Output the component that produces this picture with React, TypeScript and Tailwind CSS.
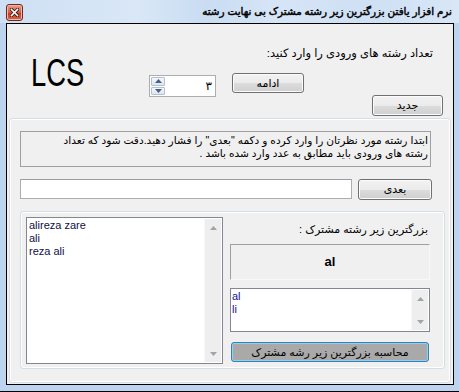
import React from "react";

function WinButton({ label, className = "" }: { label: string; className?: string }) {
  return (
    <div
      className={
        "flex items-center justify-center rounded-[3px] border border-[#707070] bg-[linear-gradient(to_bottom,#f2f2f2_0%,#ebebeb_50%,#dddddd_51%,#cfcfcf_100%)] shadow-[inset_0_0_0_1px_#fcfcfc] text-[11px] leading-none " +
        className
      }
      dir="rtl"
    >
      {label}
    </div>
  );
}

function Tri({ down = false, color = "#a3a3a3" }: { down?: boolean; color?: string }) {
  return (
    <svg width="7" height="4" viewBox="0 0 7 4">
      {down ? <polygon points="0,0 7,0 3.5,4" fill={color} /> : <polygon points="0,4 7,4 3.5,0" fill={color} />}
    </svg>
  );
}

function ScrollBar() {
  return (
    <div className="w-[17px] h-full flex flex-col justify-between bg-[#eeeeee] border-l border-[#f8f8f8]">
      <div className="h-[17px] flex items-center justify-center">
        <Tri />
      </div>
      <div className="h-[17px] flex items-center justify-center">
        <Tri down />
      </div>
    </div>
  );
}

export default function App() {
  return (
    <div className="w-[459px] h-[392px] bg-[#bdd4ee] flex flex-col overflow-hidden font-['Liberation_Sans','DejaVu_Sans',sans-serif] text-[11px] text-black">
      {/* Title bar */}
      <div className="h-[23px] shrink-0 flex items-start justify-between bg-[linear-gradient(to_right,#cfe0f4,#d9e7f7_30%,#c9dcf2_45%,#d6e5f6_60%,#cfe0f4_80%,#d8e6f6)]">
        <div className="ml-[6px] mt-[4px] w-[17px] h-[17px] rounded-[3px] border border-[#6b2a20] bg-[linear-gradient(to_bottom,#e8a08e,#d5593f_50%,#c43b22_51%,#d8664a)] flex items-center justify-center shadow-[inset_0_0_0_1px_#f0b8a8]">
          <svg width="9" height="9" viewBox="0 0 9 9">
            <path d="M1.5 1.5 L7.5 7.5 M7.5 1.5 L1.5 7.5" stroke="#3a1a14" strokeWidth="3.2" strokeLinecap="square" />
            <path d="M1.5 1.5 L7.5 7.5 M7.5 1.5 L1.5 7.5" stroke="#ffffff" strokeWidth="1.6" strokeLinecap="square" />
          </svg>
        </div>
        <div
          dir="rtl"
          className="mr-[7px] mt-[5px] text-[10.4px] leading-[14px] text-black [-webkit-text-stroke:0.45px_black]"
        >
          نرم افزار یافتن بزرگترین زیر رشته مشترک بی نهایت رشته
        </div>
      </div>

      {/* Client area */}
      <div className="ml-[6px] w-[448px] h-[362px] shrink-0 border border-black bg-[#f0f0f0] flex flex-col">
        {/* Top area */}
        <div className="h-[94px] flex">
          <div className="w-[142px] pl-[24px] pt-[30px]">
            <div className="text-[38px] leading-none font-['Liberation_Sans',sans-serif] scale-x-[0.72] origin-left">LCS</div>
          </div>
          <div className="w-[67px] pt-[51px]">
            <div className="w-[67px] h-[22px] bg-white border border-[#abadb3] flex items-center">
              <div className="ml-[1px] w-[14px] h-[18px] flex flex-col gap-[1px]">
                <div className="flex-1 flex items-center justify-center bg-[linear-gradient(to_bottom,#f4f7fb,#dde5ef)] border border-[#b4c0d2] rounded-[1px]">
                  <Tri color="#4a5f85" />
                </div>
                <div className="flex-1 flex items-center justify-center bg-[linear-gradient(to_bottom,#f4f7fb,#dde5ef)] border border-[#b4c0d2] rounded-[1px]">
                  <Tri down color="#4a5f85" />
                </div>
              </div>
              <div className="flex-1 text-right pr-[3px] text-[12px]">٣</div>
            </div>
          </div>
          <div className="flex-1 flex flex-col items-start">
            <div dir="rtl" className="self-stretch mt-[23px] h-[13px] leading-[13px] pr-[20px] text-right text-[11.5px]">
              تعداد رشته های ورودی را وارد کنید:
            </div>
            <WinButton label="ادامه" className="mt-[13px] ml-[16px] w-[72px] h-[20px]" />
            <WinButton label="جدید" className="mt-[2px] self-end mr-[10px] w-[71px] h-[21px]" />
          </div>
        </div>

        {/* Group 2 */}
        <div className="ml-[2px] w-[442px] h-[265px] rounded-[3px] border border-[#d5dfe5] shadow-[inset_0_0_0_1px_#ffffff] flex flex-col">
          <div
            dir="rtl"
            className="ml-[10px] mt-[12px] w-[411px] h-[36px] border border-[#a0a0a0] pr-[2px] pt-[2px] text-right leading-[13px] text-[10.6px]"
          >
            ابتدا رشته مورد نظرتان را وارد کرده و دکمه "بعدی" را فشار دهید.دقت شود که تعداد
            <br />
            رشته های ورودی باید مطابق به عدد وارد شده باشد .
          </div>
          <div className="mt-[12px] flex items-start">
            <div className="ml-[10px] w-[332px] h-[20px] bg-white border border-[#abadb3] border-t-[#9a9ca4]" />
            <WinButton label="بعدی" className="ml-[6px] w-[74px] h-[21px]" />
          </div>

          {/* Inner group */}
          <div className="ml-[10px] mt-[11px] w-[425px] h-[158px] rounded-[3px] border border-[#d5dfe5] shadow-[inset_0_0_0_1px_#ffffff] flex">
            <div className="ml-[5px] mt-[5px] w-[197px] h-[147px] bg-white border border-[#828790] flex">
              <div className="flex-1 pl-[2px] pt-[1px] leading-[13px] text-[#10104a]">
                <div>alireza zare</div>
                <div>ali</div>
                <div>reza ali</div>
              </div>
              <div className="py-[1px] pr-[1px]">
                <ScrollBar />
              </div>
            </div>
            <div className="ml-[7px] w-[200px] flex flex-col">
              <div dir="rtl" className="mt-[11px] h-[13px] leading-[13px] pr-[2px] text-right">
                بزرگترین زیر رشته مشترک :
              </div>
              <div className="mt-[8px] h-[36px] border border-[#a0a0a0] border-r-[#f8f8f8] border-b-[#f8f8f8] flex items-center justify-center font-bold text-[13px]">
                al
              </div>
              <div className="mt-[8px] h-[44px] bg-white border border-[#828790] flex">
                <div className="flex-1 pl-[1px] pt-[1px] leading-[13px] text-[#14149a]">
                  <div>al</div>
                  <div>li</div>
                </div>
                <div className="py-[1px] pr-[1px]">
                  <ScrollBar />
                </div>
              </div>
              <div
                dir="rtl"
                className="mt-[10px] ml-[1px] w-[198px] h-[20px] rounded-[3px] border border-[#3c7fb1] bg-[#a9a9a9] shadow-[inset_0_0_0_1px_#8fd0f3] flex items-center justify-center text-[11px]"
              >
                محاسبه بزرگترین زیر رشه مشترک
              </div>
            </div>
          </div>
        </div>
      </div>

      {/* Bottom frame */}
      <div className="flex-1 border-b border-black" />
    </div>
  );
}
